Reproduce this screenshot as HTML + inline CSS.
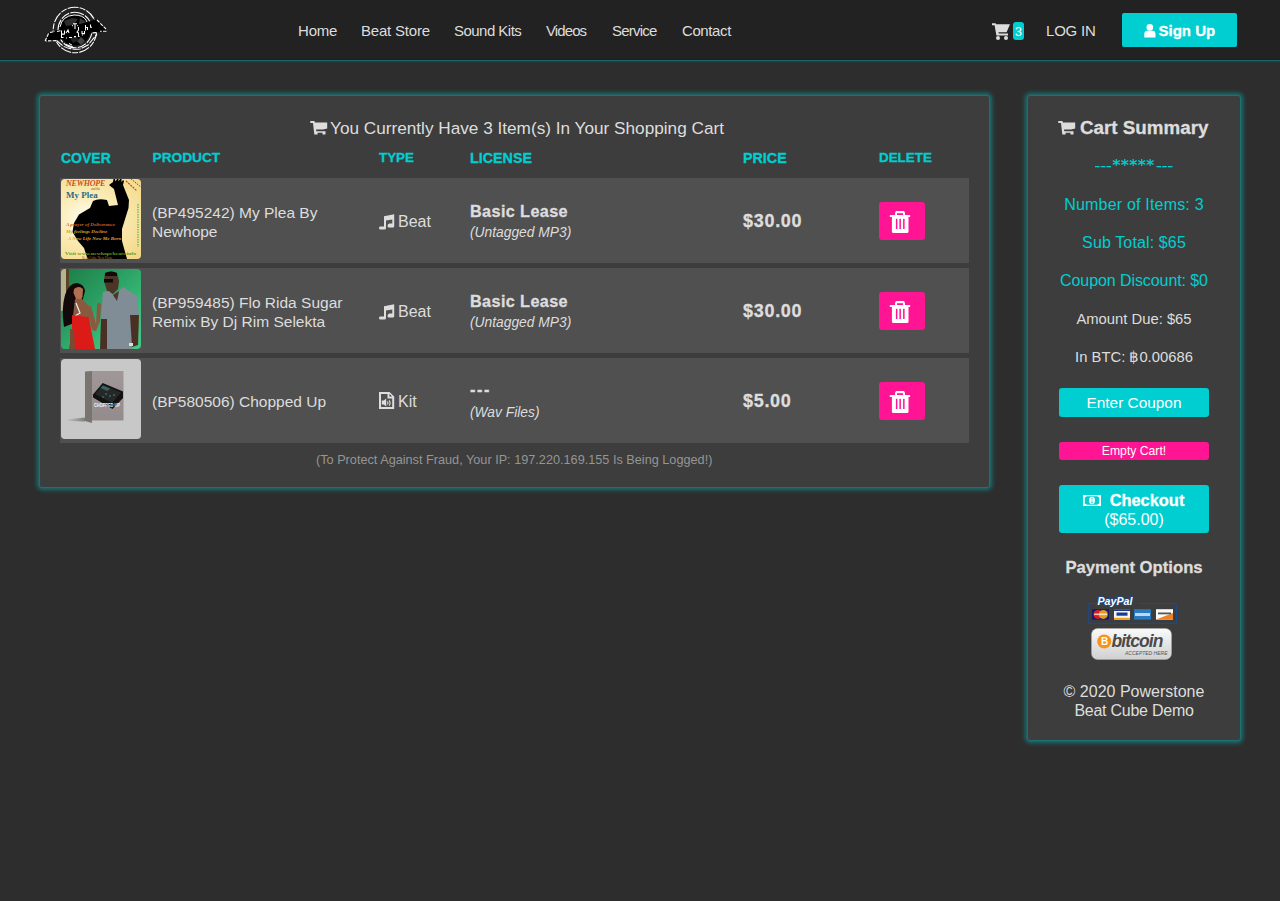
<!DOCTYPE html>
<html><head><meta charset="utf-8"><title>Cart</title>
<style>
*{margin:0;padding:0;box-sizing:border-box}
html,body{width:1280px;height:901px;overflow:hidden;background:#2d2d2d;font-family:"Liberation Sans",sans-serif;color:#ddd}
.a{position:absolute;white-space:nowrap}
#hdr{position:absolute;left:0;top:0;width:1280px;height:60px;background:#222}
#hline{position:absolute;left:0;top:59px;width:1280px;height:1px;background:#1f1b1b}
#hline2{position:absolute;left:0;top:60px;width:1280px;height:1px;background:#1c6a6b;box-shadow:0 1px 2px rgba(28,106,107,.5)}
.nav{font-size:15px;color:#ddd;top:22px;line-height:18px;letter-spacing:-0.2px}
.panel{position:absolute;background:#3d3d3d;border:1px solid #1a7272;border-radius:3px;box-shadow:0 0 4px 2px rgba(26,114,114,1)}
.th{font-weight:bold;-webkit-text-stroke:0.3px #00ced1;color:#00ced1;top:150px;line-height:16px}
.row{position:absolute;left:60px;width:909px;height:85px;background:#505050}
.cov{position:absolute;left:1px;top:1px;width:80px;height:80px;border-radius:4px;overflow:hidden}
.prod{position:absolute;left:92px;font-size:15.5px;line-height:19px;color:#ddd}
.typ{position:absolute;left:338px;font-size:16px;color:#ddd;line-height:18px}
.lic{position:absolute;left:410px;color:#ddd;top:23px}
.lic b{display:block;-webkit-text-stroke:0.3px #ddd;font-size:16.2px;line-height:20px;letter-spacing:0.4px}
.lic i{display:block;font-size:13.8px;line-height:20px;margin-top:1.5px}
.price{-webkit-text-stroke:0.3px #ddd;position:absolute;left:683px;top:33px;font-size:18px;font-weight:bold;color:#ddd;line-height:20px;letter-spacing:0.7px}
.del{position:absolute;left:819px;top:24px;width:46px;height:38px;background:#ff1493;border-radius:3px}
.del svg{position:absolute;left:0;top:0}
.side{font-size:16px;color:#00ced1;line-height:19px;text-align:center;left:1028px;width:212px}
.btn{position:absolute;left:1059px;width:150px;border-radius:3px;color:#fff;text-align:center}
</style></head><body>
<div id="hdr"></div><div id="hline"></div><div id="hline2"></div>
<svg class="a" style="left:40px;top:2px" width="72" height="54" viewBox="40 2 72 54">
  <ellipse cx="75" cy="30" rx="21.8" ry="22.8" fill="none" stroke="#fff" stroke-width="1.1" stroke-dasharray="11 1.2 6 1.2"/>
  <ellipse cx="75" cy="30" rx="17" ry="17.8" fill="none" stroke="#fff" stroke-width="1.1" stroke-dasharray="14 1.3 9 1.3"/>
  <circle cx="75" cy="30" r="15.5" fill="#000"/>
  <path d="M60 27 Q62 16 74 15 Q83 15 86 20 L88 24" fill="none" stroke="#fff" stroke-width="1"/>
  <path d="M64 21 L72 18 L78 19 L74 25 L66 26 Z" fill="#2e2e2e"/>
  <path d="M80 18 L86 22 L84 27 L79 24 Z" fill="#383838"/>
  <path d="M77 41 L81 37 L85 41 L81 45 Z" fill="#444"/>
  <path d="M70 38 L76 36 L79 40 L73 43 Z" fill="#222"/>
  <path d="M45.1 41 L49 32.6 L96.4 19.4 L107.1 30.2 L106.5 31.7 L97 32.3 L56.2 40.4 Z" fill="#000"/>
  <path d="M45.1 41 L49 32.6 M50 32.5 L55 31.3 M97 20 L107.1 30.2 M106.5 31.2 L100 31.3 M96 32.6 L91 33 M56.2 40.6 L45.6 41" fill="none" stroke="#fff" stroke-width="1.1" stroke-dasharray="3.5 1.2"/>
  <path d="M56.5 40.5 L63 46 Q70 50 80 49 L88 45 L97 34" fill="none" stroke="#fff" stroke-width="1.1" stroke-dasharray="8 1.3"/>
  <path d="M66 44.5 L73 47 M69 43.5 L72 45" fill="none" stroke="#fff" stroke-width="1"/>
  <g fill="none" stroke="#fff" stroke-width="1.05">
    <path d="M73 23.8 H77 M75 23.8 V29 M72.2 25.6 h0.8 M77.3 25.6 h0.8"/>
    <path d="M78.5 27 V30 L77 32 L78.5 33 V36.5 H79.5"/>
    <path d="M82 31 V33.6 H84.5 V31 M85.5 25 V30.5 M85.5 27.5 H87.5 V30 M90.5 24.5 V27.3 H92"/>
    <path d="M61.5 30.5 V34 H64.5 V30.5 M63 34 V35 M66 33 L68 30 L69 33 M61.5 34.5 V37.5 H63.5"/>
    <path d="M69 37.5 H72 M74 36.6 H76 M66 38 h1 M82 35 h1"/>
    <path d="M60.5 30.8 L57 31.5"/>
  </g>
</svg>
<div class="a nav" style="left:298px">Home</div>
<div class="a nav" style="left:361px">Beat Store</div>
<div class="a nav" style="left:454px;letter-spacing:-0.53px">Sound Kits</div>
<div class="a nav" style="left:546px;letter-spacing:-0.9px">Videos</div>
<div class="a nav" style="left:612px;letter-spacing:-0.77px">Service</div>
<div class="a nav" style="left:682px;letter-spacing:-0.4px">Contact</div>
<svg class="a" style="left:992px;top:22.5px" width="19" height="17" viewBox="0 0 19 17"><path d="M0 0.3 H3.6 L4.1 1.3 H18 L14.6 9.3 H6.4 L6.8 10.4 H16 V12.4 H4.4 L2.6 2.2 H0 Z" fill="#ddd"/><circle cx="6" cy="15" r="2" fill="#ddd"/><circle cx="14" cy="15" r="2" fill="#ddd"/></svg>
<div class="a" style="left:1013px;top:22px;width:11px;height:18px;background:#00ced1;border-radius:3px;color:#fff;font-size:12.5px;line-height:20.5px;text-align:center">3</div>
<div class="a nav" style="left:1046px">LOG IN</div>
<div class="a" style="left:1122px;top:13px;width:115px;height:34px;background:#00ced1;border-radius:2px"></div>
<svg class="a" style="left:1143.5px;top:23.5px" width="12" height="14" viewBox="0 0 12 14"><circle cx="5.8" cy="3.4" r="3.3" fill="#fff"/><path d="M0.3 13.5 V10.2 Q0.3 6.8 3.3 6.8 H8.4 Q11.5 6.8 11.5 10.2 V13.5 Z" fill="#fff"/></svg>
<div class="a" style="left:1158.5px;top:22px;font-size:15px;font-weight:bold;color:#fff;line-height:18px;-webkit-text-stroke:0.3px #fff">Sign Up</div>

<div class="panel" style="left:39px;top:95px;width:951px;height:393px"></div>
<svg class="a" style="left:309.5px;top:120.5px" width="18" height="14" viewBox="0 0 18 14"><path d="M0.3 0 H4.5 L4.8 1.4 H17.2 V7.6 L13 8.5 H6 L6.3 10.3 H15.5 V13.6 H12.5 V11.8 H7.6 V13.6 H4.3 L3 1.9 H0.3 Z" fill="#ddd"/></svg>
<div class="a" style="left:330px;top:117.5px;font-size:17.2px;line-height:20px;color:#ddd">You Currently Have 3 Item(s) In Your Shopping Cart</div>
<div class="a th" style="left:61px;font-size:14px">COVER</div>
<div class="a th" style="left:152.5px;font-size:13.7px">PRODUCT</div>
<div class="a th" style="left:379px;font-size:13.4px">TYPE</div>
<div class="a th" style="left:470px;font-size:14.3px">LICENSE</div>
<div class="a th" style="left:743px;font-size:14.3px">PRICE</div>
<div class="a th" style="left:879px;font-size:13.4px">DELETE</div>
<div class="row" style="top:178px">
  <div class="cov" style="background:radial-gradient(ellipse at 32% 48%,#fffcf0 0%,#fbeebb 35%,#f2d682 100%)">
<svg width="80" height="80" viewBox="0 0 80 80">
<path d="M48 6 L52 3 L52.5 0 L54 0 L54.5 2.5 L56 0 L57.5 0 L57.5 2.5 L59 0 L60.5 0 L60.5 3 L62 1 L63 2 L62 6 L68 21 L67.5 29 L61 50 L61 62 L66 80 L26.6 80 L23 69 L17 62 L11.5 53 L13 44 L18 35.5 L29 29 L32 22 Q37 19 46 21 L48 27 L57 26 L53 10 Z" fill="#000"/>
<text x="5" y="6.5" font-family="Liberation Serif" font-style="italic" font-weight="bold" font-size="8" fill="#c8501e" letter-spacing="-0.2">NEWHOPE</text>
<text x="30" y="10.5" font-family="Liberation Serif" font-style="italic" font-size="3" fill="#6a4a20">and the</text>
<text x="5" y="18.5" font-family="Liberation Serif" font-weight="bold" font-size="9" fill="#2f6a80">My Plea</text>
<text x="5" y="47" font-family="Liberation Serif" font-style="italic" font-weight="bold" font-size="5" fill="#d06020">A prayer of Deliverance</text>
<text x="5" y="54" font-family="Liberation Serif" font-style="italic" font-weight="bold" font-size="5" fill="#d8a030">My feelings Decline</text>
<text x="7" y="61" font-family="Liberation Serif" font-style="italic" font-weight="bold" font-size="5" fill="#e0a040">A New Life New Me Born</text>
<text x="4" y="76" font-family="Liberation Serif" font-weight="bold" font-size="5" fill="#6a9a20" textLength="71" lengthAdjust="spacingAndGlyphs">Visit www.newhopebeats.info</text>
<text x="21" y="80" font-family="Liberation Serif" font-size="3.5" fill="#a07020">Beat Cube New Hope</text>
<path d="M77 25 V68" stroke="#50a040" stroke-width="1" stroke-dasharray="1.5 1"/>
<path d="M65 2 L76 12" stroke="#d04020" stroke-width="1.2" stroke-dasharray="2 1"/>
<path d="M70 0 L80 8" stroke="#5050c0" stroke-width="1" stroke-dasharray="1.5 1"/>
</svg></div>
  <div class="prod" style="top:24.5px">(BP495242) My Plea By<br>Newhope</div>
  <svg class="a" style="left:319px;top:35.5px" width="16" height="16" viewBox="0 0 16 16"><path d="M5 2.3 L15.2 0.3 V12.3 Q15.2 13.6 13.8 13.6 H10 Q8.5 13.6 8.5 12 Q8.5 10 10.5 9.6 H13.3 V5.6 L7 6.5 V14.2 Q7 15.5 5.6 15.5 H1.4 Q0 15.5 0 14 Q0 12.6 1.5 12.6 H5 Z" fill="#ddd"/></svg>
  <div class="typ" style="top:35px">Beat</div>
  <div class="lic"><b>Basic Lease</b><i>(Untagged MP3)</i></div>
  <div class="price">$30.00</div>
  <div class="del"><svg width="46" height="38" viewBox="0 0 46 38"><path d="M17 9 H25 L26 11 V13 H24 V11.2 H18 V13 H16 V11 Z" fill="#fff"/><rect x="10.8" y="13" width="20.3" height="2" fill="#fff"/><path d="M12.9 15 H29.5 V29.5 Q29.5 31 28 31 H14.4 Q12.9 31 12.9 29.5 Z" fill="#fff"/><rect x="16.9" y="16.8" width="1.5" height="10.2" fill="#ff1493"/><rect x="20.4" y="16.8" width="1.5" height="10.2" fill="#ff1493"/><rect x="24.1" y="16.8" width="1.5" height="10.2" fill="#ff1493"/></svg></div>
</div>
<div class="row" style="top:268px">
  <div class="cov" style="background:linear-gradient(135deg,#1c7c46 0%,#2a9e62 40%,#3cbf7c 75%,#44c884 100%)">
<svg width="80" height="80" viewBox="0 0 80 80">
<rect x="0" y="0" width="5" height="42" fill="#b8b48e"/><rect x="5" y="0" width="3" height="40" fill="#5a4428"/>
<path d="M3 58 Q0 40 4 26 Q8 14 16 14 Q23 15 24 22 L22 30 L21 36 L14 44 L13 54 Z" fill="#120a0a"/>
<path d="M13 20 Q18 16 22 20 L21.5 28 Q19.5 32 15.5 31 L12.5 24 Z" fill="#b07050"/>
<path d="M14 30 L21 30 L29 38 L30 48 L12 47 Z" fill="#8a5a40"/>
<path d="M26 38 L30 37 L35 55 L36 36 L38 33 L40 36 L39 52 L35 62 L31 61 Z" fill="#8a5a40"/>
<path d="M15 34 L19 44 L14 47" stroke="#eee" stroke-width="1.2" fill="none"/>
<path d="M11 46 L28 48 L30 60 L34 80 H8 L11 62 Z" fill="#dc1a18"/>
<path d="M9 60 L13 60 L14 80 H9 Z" fill="#7a4a34"/>
<path d="M44 4 Q50 1 56 4 L58 12 L57 20 L52 25 L46 22 L43 12 Z" fill="#4e3426"/>
<path d="M44 4 Q50 1 56 4 L56 7 L44 7 Z" fill="#120a0a"/>
<rect x="43" y="10" width="9" height="3.5" fill="#0a0a0a"/>
<path d="M42 23 L48 22 L52 26 L58 22 L62 18 L76 27 L78 46 L70 46 L71 80 H46 L46 50 L40 50 Z" fill="#808c96"/>
<path d="M52 26 L58 22 L56 32 Z" fill="#4e3426"/>
<path d="M40 50 L46 50 L46 80 H39 Z" fill="#4a3024"/>
<path d="M69 46 L78 46 L77 76 L71 78 Z" fill="#4a3024"/>
<rect x="68" y="74" width="4" height="3" fill="#ddd"/>
</svg></div>
  <div class="prod" style="top:24.5px">(BP959485) Flo Rida Sugar<br>Remix By Dj Rim Selekta</div>
  <svg class="a" style="left:319px;top:35.5px" width="16" height="16" viewBox="0 0 16 16"><path d="M5 2.3 L15.2 0.3 V12.3 Q15.2 13.6 13.8 13.6 H10 Q8.5 13.6 8.5 12 Q8.5 10 10.5 9.6 H13.3 V5.6 L7 6.5 V14.2 Q7 15.5 5.6 15.5 H1.4 Q0 15.5 0 14 Q0 12.6 1.5 12.6 H5 Z" fill="#ddd"/></svg>
  <div class="typ" style="top:35px">Beat</div>
  <div class="lic"><b>Basic Lease</b><i>(Untagged MP3)</i></div>
  <div class="price">$30.00</div>
  <div class="del"><svg width="46" height="38" viewBox="0 0 46 38"><path d="M17 9 H25 L26 11 V13 H24 V11.2 H18 V13 H16 V11 Z" fill="#fff"/><rect x="10.8" y="13" width="20.3" height="2" fill="#fff"/><path d="M12.9 15 H29.5 V29.5 Q29.5 31 28 31 H14.4 Q12.9 31 12.9 29.5 Z" fill="#fff"/><rect x="16.9" y="16.8" width="1.5" height="10.2" fill="#ff1493"/><rect x="20.4" y="16.8" width="1.5" height="10.2" fill="#ff1493"/><rect x="24.1" y="16.8" width="1.5" height="10.2" fill="#ff1493"/></svg></div>
</div>
<div class="row" style="top:358px">
  <div class="cov" style="background:#c8c8c8">
<svg width="80" height="80" viewBox="0 0 80 80">
<defs><linearGradient id="bx" x1="0" y1="0" x2="0" y2="1"><stop offset="0" stop-color="#a09898"/><stop offset="1" stop-color="#948c8c"/></linearGradient>
<linearGradient id="sh" x1="0" y1="0" x2="1" y2="0"><stop offset="0" stop-color="#c8c8c8"/><stop offset="1" stop-color="#6a6a6a"/></linearGradient></defs>
<path d="M5 60.5 L24 58.5 L24 62.5 L8 62 Z" fill="url(#sh)" opacity=".8"/>
<path d="M24 12.5 L31 12 V64 L24 62 Z" fill="#7a7470"/>
<rect x="31" y="12" width="31.5" height="49.5" fill="url(#bx)"/>
<path d="M32 35.5 L41.7 24 L62 32.5 V39 L51.5 50 L32 38.5 Z" fill="#121212"/>
<path d="M34 35 L42 26 L60 33.5 L51 44 Z" fill="#262828"/>
<path d="M42 26.5 L49 29.5 L46.5 32 L39.5 29 Z" fill="#3a6464"/>
<path d="M44 35 h2 M48 37 h2 M41 38 h2 M52 36 h2" stroke="#4a8080" stroke-width="1"/>
<text x="33" y="47.6" font-family="Liberation Sans" font-weight="bold" font-size="4.6" fill="#f4f4f4" textLength="26" lengthAdjust="spacingAndGlyphs">CHOPPED UP</text>
</svg></div>
  <div class="prod" style="top:34px">(BP580506) Chopped Up</div>
  <svg class="a" style="left:319px;top:34px" width="16" height="17" viewBox="0 0 16 17"><path fill-rule="evenodd" d="M0 0 H10.5 L15.2 4.5 V17 H0 Z M2 2 V15 H13.2 V6.5 H8.5 V2 Z" fill="#ddd"/><path d="M10.5 2 L13 4.5 H10.5 Z" fill="#3a3050"/><path d="M2.8 10 H4.8 L7.2 8 V16 L4.8 14 H2.8 Z" fill="#ddd" transform="translate(0,-1.5)"/><path d="M8.4 9.5 Q9.6 11 8.4 12.5 M10 8.3 Q12.2 11 10 13.7" fill="none" stroke="#ddd" stroke-width="1.1"/></svg>
  <div class="typ" style="top:35px">Kit</div>
  <div class="lic"><b><span style="letter-spacing:1.6px;position:relative;top:-2px">---</span></b><i>(Wav Files)</i></div>
  <div class="price">$5.00</div>
  <div class="del"><svg width="46" height="38" viewBox="0 0 46 38"><path d="M17 9 H25 L26 11 V13 H24 V11.2 H18 V13 H16 V11 Z" fill="#fff"/><rect x="10.8" y="13" width="20.3" height="2" fill="#fff"/><path d="M12.9 15 H29.5 V29.5 Q29.5 31 28 31 H14.4 Q12.9 31 12.9 29.5 Z" fill="#fff"/><rect x="16.9" y="16.8" width="1.5" height="10.2" fill="#ff1493"/><rect x="20.4" y="16.8" width="1.5" height="10.2" fill="#ff1493"/><rect x="24.1" y="16.8" width="1.5" height="10.2" fill="#ff1493"/></svg></div>
</div>
<div class="a" style="left:316px;top:453px;font-size:12.7px;line-height:15px;color:#959595">(To Protect Against Fraud, Your IP: 197.220.169.155 Is Being Logged!)</div>

<div class="panel" style="left:1027px;top:95px;width:214px;height:646px"></div>
<svg class="a" style="left:1057.5px;top:121px" width="18" height="14" viewBox="0 0 18 14"><path d="M0.3 0 H4.5 L4.8 1.4 H17.2 V7.6 L13 8.5 H6 L6.3 10.3 H15.5 V13.6 H12.5 V11.8 H7.6 V13.6 H4.3 L3 1.9 H0.3 Z" fill="#ddd"/></svg>
<div class="a" style="left:1080px;top:118px;font-size:18.8px;font-weight:bold;-webkit-text-stroke:0.3px #ddd;line-height:20px;color:#ddd">Cart Summary</div>
<svg class="a" style="left:1094px;top:157px" width="80" height="11" viewBox="0 0 80 11"><rect x="1.0" y="9" width="4.6" height="1.3" fill="#00ced1"/><rect x="62.5" y="9" width="4.6" height="1.3" fill="#00ced1"/><rect x="6.7" y="9" width="4.6" height="1.3" fill="#00ced1"/><rect x="68.2" y="9" width="4.6" height="1.3" fill="#00ced1"/><rect x="12.4" y="9" width="4.6" height="1.3" fill="#00ced1"/><rect x="73.9" y="9" width="4.6" height="1.3" fill="#00ced1"/><g stroke="#00ced1" stroke-width="1.25"><line x1="22.30" y1="2" x2="22.30" y2="9"/><line x1="18.80" y1="3.6" x2="25.80" y2="7.4"/><line x1="18.80" y1="7.4" x2="25.80" y2="3.6"/></g><g stroke="#00ced1" stroke-width="1.25"><line x1="30.75" y1="2" x2="30.75" y2="9"/><line x1="27.25" y1="3.6" x2="34.25" y2="7.4"/><line x1="27.25" y1="7.4" x2="34.25" y2="3.6"/></g><g stroke="#00ced1" stroke-width="1.25"><line x1="39.20" y1="2" x2="39.20" y2="9"/><line x1="35.70" y1="3.6" x2="42.70" y2="7.4"/><line x1="35.70" y1="7.4" x2="42.70" y2="3.6"/></g><g stroke="#00ced1" stroke-width="1.25"><line x1="47.65" y1="2" x2="47.65" y2="9"/><line x1="44.15" y1="3.6" x2="51.15" y2="7.4"/><line x1="44.15" y1="7.4" x2="51.15" y2="3.6"/></g><g stroke="#00ced1" stroke-width="1.25"><line x1="56.10" y1="2" x2="56.10" y2="9"/><line x1="52.60" y1="3.6" x2="59.60" y2="7.4"/><line x1="52.60" y1="7.4" x2="59.60" y2="3.6"/></g></svg>
<div class="a side" style="top:195px;letter-spacing:0.19px">Number of Items: 3</div>
<div class="a side" style="top:233px;letter-spacing:0.13px">Sub Total: $65</div>
<div class="a side" style="top:271px;letter-spacing:-0.08px">Coupon Discount: $0</div>
<div class="a side" style="top:309.5px;color:#ddd;font-size:14.8px">Amount Due: $65</div>
<div class="a side" style="top:347.5px;color:#ddd;font-size:14.8px">In BTC: ฿0.00686</div>
<div class="btn" style="top:388px;height:29px;background:#00ced1;font-size:15.4px;line-height:29px">Enter Coupon</div>
<div class="btn" style="top:442px;height:18px;background:#ff1493;font-size:12.2px;line-height:18px">Empty Cart!</div>
<div class="btn" style="top:485px;height:48px;background:#00ced1;font-size:16px;line-height:19px;padding-top:6px"><svg style="position:absolute;left:24px;top:10px" width="18" height="11" viewBox="0 0 18 11"><rect x="0" y="0" width="18" height="11" fill="#fff"/><path d="M1.8 2.6 L4 1.2 H14 L16.2 2.6 V8.4 L14 9.8 H4 L1.8 8.4 Z" fill="#00ced1"/><ellipse cx="9" cy="5.5" rx="3" ry="3.7" fill="#fff"/><path d="M8 3.3 L9.3 2.6 V7.6 H10.2 V8.3 H7.8 V7.6 H8.7 V3.6 Z" fill="#00ced1"/></svg><b style="margin-left:26px;font-size:16.4px;-webkit-text-stroke:0.3px #fff">Checkout</b><br>($65.00)</div>
<div class="a side" style="top:557.5px;color:#ddd;font-weight:bold;font-size:16.7px;-webkit-text-stroke:0.3px #ddd">Payment Options</div>
<svg class="a" style="left:1088px;top:595px" width="90" height="30" viewBox="0 0 90 30">
  <path d="M8 8.5 H0.8 V28.2 H88.4 V8.5 H50" fill="none" stroke="#1d4a8c" stroke-width="1.1"/>
  <text x="9.5" y="10.2" font-family="Liberation Sans" font-style="italic" font-weight="bold" font-size="11" fill="#fff" stroke="#1d4a8c" stroke-width="1.6" paint-order="stroke" textLength="35" lengthAdjust="spacingAndGlyphs">PayPal</text>
  <rect x="4" y="14.2" width="17" height="10.4" fill="#1a1a6a"/><circle cx="10" cy="19.4" r="4.5" fill="#d8201a"/><circle cx="15.3" cy="19.4" r="4.5" fill="#f0a020" opacity=".95"/><rect x="6" y="18.5" width="13" height="1.6" fill="#fff" opacity=".7"/>
  <rect x="26" y="14.2" width="16" height="10.4" fill="#f4f4f4"/><rect x="26" y="14.2" width="16" height="1.8" fill="#1a3a8a"/><rect x="26" y="22.8" width="16" height="1.8" fill="#f0a020"/><rect x="28.5" y="17.5" width="11" height="3.2" fill="#1a3a8a"/>
  <rect x="46" y="14.2" width="17" height="10.4" fill="#2a7ac0"/><rect x="47" y="18" width="15" height="3" fill="#dfefff" opacity=".8"/>
  <rect x="68" y="14.2" width="17" height="10.4" fill="#fafafa"/><path d="M68 24.6 L85 18 V24.6 Z" fill="#f08020"/><rect x="70" y="17.5" width="13" height="1.8" fill="#555"/>
</svg>
<svg class="a" style="left:1091px;top:628px" width="81" height="32" viewBox="0 0 81 32">
  <defs><linearGradient id="bg1" x1="0" y1="0" x2="0" y2="1"><stop offset="0" stop-color="#fafafa"/><stop offset="1" stop-color="#d0d0d0"/></linearGradient></defs>
  <rect x="0.5" y="0.5" width="80" height="31" rx="6" fill="url(#bg1)" stroke="#aaa" stroke-width="0.6"/>
  <circle cx="13.2" cy="13.5" r="7" fill="#f7931a"/>
  <text x="10" y="17.3" font-family="Liberation Sans" font-weight="bold" font-size="10" fill="#fff">B</text>
  <text x="20.5" y="19" font-family="Liberation Sans" font-style="italic" font-weight="bold" font-size="17.5" fill="#4a4a4a" letter-spacing="-0.9">bitcoin</text>
  <text x="34" y="26.5" font-family="Liberation Sans" font-style="italic" font-size="5" fill="#555">ACCEPTED HERE</text>
</svg>
<div class="a side" style="top:682px;color:#ddd">© 2020 Powerstone<br><span style="letter-spacing:-0.25px">Beat Cube Demo</span></div>
</body></html>
